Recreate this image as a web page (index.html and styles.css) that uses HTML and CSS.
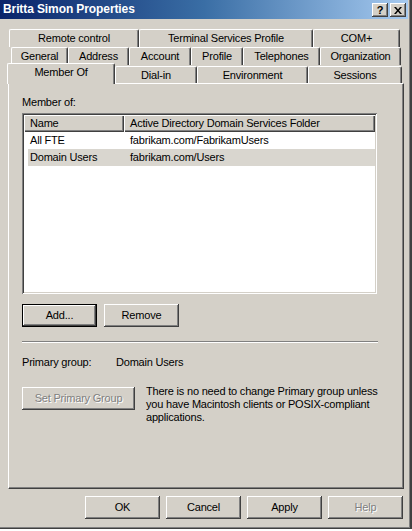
FILE: index.html
```html
<!DOCTYPE html>
<html>
<head>
<meta charset="utf-8">
<link rel="stylesheet" href="styles.css">
</head>
<body>
<div class="window">
  <div class="titlebar">
    <span class="title">Britta Simon Properties</span>
    <div class="caption-btns">
      <span class="cbtn help">?</span>
      <span class="cbtn close"><svg width="8" height="7" viewBox="0 0 8 7"><path d="M0 0h2l2 2.5 2-2.5h2l-3 3.5 3 3.5h-2l-2-2.5-2 2.5h-2l3-3.5z" fill="#000"/></svg></span>
    </div>
  </div>

  <div class="tabs">
    <div class="tabrow row1">
      <div class="tab w-remote">Remote control</div>
      <div class="tab w-terminal">Terminal Services Profile</div>
      <div class="tab w-com">COM+</div>
    </div>
    <div class="tabrow row2">
      <div class="tab w-general">General</div>
      <div class="tab w-address">Address</div>
      <div class="tab w-account">Account</div>
      <div class="tab w-profile">Profile</div>
      <div class="tab w-tel">Telephones</div>
      <div class="tab w-org">Organization</div>
    </div>
    <div class="tabrow row3">
      <div class="tab selected w-member">Member Of</div>
      <div class="tab w-dialin">Dial-in</div>
      <div class="tab w-env">Environment</div>
      <div class="tab w-sessions">Sessions</div>
    </div>
  </div>

  <div class="panel">
    <div class="label">Member of:</div>
    <div class="listview">
      <div class="lv-header">
        <div class="hcell col1">Name</div>
        <div class="hcell col2">Active Directory Domain Services Folder</div>
      </div>
      <div class="lv-row">
        <div class="cell col1">All FTE</div>
        <div class="cell col2">fabrikam.com/FabrikamUsers</div>
      </div>
      <div class="lv-row sel">
        <div class="cell col1">Domain Users</div>
        <div class="cell col2">fabrikam.com/Users</div>
      </div>
    </div>

    <div class="btnrow">
      <button class="btn default">Add...</button>
      <button class="btn">Remove</button>
    </div>

    <div class="separator"></div>

    <div class="primary">
      <span class="plabel">Primary group:</span>
      <span class="pvalue">Domain Users</span>
    </div>

    <div class="setrow">
      <button class="btn disabled wide">Set Primary Group</button>
      <p class="note">There is no need to change Primary group unless you have Macintosh clients or POSIX-compliant applications.</p>
    </div>
  </div>

  <div class="footer">
    <button class="btn">OK</button>
    <button class="btn">Cancel</button>
    <button class="btn">Apply</button>
    <button class="btn disabled">Help</button>
  </div>
</div>
</body>
</html>
```

FILE: styles.css
```css
html, body {
  margin: 0;
  padding: 0;
  background: #ffffff;
}

body {
  width: 412px;
  height: 531px;
  overflow: hidden;
  font-family: "Liberation Sans", Arial, sans-serif;
  font-size: 11px;
  letter-spacing: -0.2px;
  line-height: 13px;
  color: #000;
}

.window {
  box-sizing: border-box;
  width: 412px;
  height: 529px;
  background: #d4d0c8;
  padding-right: 4px;
  display: flex;
  flex-direction: column;
  box-shadow: inset -2px -1px #404040, inset -3px -2px #808080;
}

/* Title bar */
.titlebar {
  height: 19px;
  background: linear-gradient(to right, #0a246a 0%, #3a6ea5 50%, #a6caf0 100%);
  display: flex;
  align-items: center;
  justify-content: space-between;
  padding: 0 2px 0 3px;
}

.title {
  color: #fff;
  font-weight: bold;
  font-size: 12px;
  letter-spacing: -0.1px;
  line-height: 19px;
}

.caption-btns {
  display: flex;
  gap: 2px;
  align-self: flex-start;
  margin-top: 3px;
}

.cbtn {
  box-sizing: border-box;
  width: 16px;
  height: 14px;
  background: #d4d0c8;
  box-shadow: inset -1px -1px #404040, inset 1px 1px #fff, inset -2px -2px #808080;
  display: flex;
  align-items: center;
  justify-content: center;
  font-weight: bold;
  font-size: 11px;
  line-height: 14px;
  letter-spacing: 0;
}

.cbtn svg {
  display: block;
}

/* Tabs */
.tabs {
  margin-top: 10px;
  display: flex;
  flex-direction: column;
}

.tabrow {
  display: flex;
  height: 18px;
  align-items: flex-end;
}

.row1 { padding-left: 9px; }
.row2 { padding-left: 11px; }
.row3 { padding-left: 7px; }

.tab {
  box-sizing: border-box;
  height: 18px;
  background: #d4d0c8;
  border-top: 1px solid #fff;
  border-left: 1px solid #fff;
  border-right: 1px solid #404040;
  border-radius: 2px 2px 0 0;
  box-shadow: inset -1px 0 #808080;
  text-align: center;
  line-height: 17px;
}

.row3 .tab {
  height: 17px;
  line-height: 16px;
}

.row3 .tab.selected {
  height: 21px;
  margin-bottom: -1px;
  line-height: 17px;
  padding-bottom: 3px;
  position: relative;
  z-index: 2;
}

.w-remote { width: 130px; }
.w-terminal { width: 174px; }
.w-com { width: 87px; }

.w-general { width: 57px; }
.w-address { width: 61px; }
.w-account { width: 62px; }
.w-profile { width: 52px; }
.w-tel { width: 77px; }
.w-org { width: 81px; }

.w-member { width: 108px; }
.w-dialin { width: 82px; }
.w-env { width: 111px; }
.w-sessions { width: 94px; }

/* Panel */
.panel {
  box-sizing: border-box;
  margin-left: 8px;
  width: 396px;
  height: 406px;
  border-top: 1px solid #fff;
  border-left: 1px solid #fff;
  border-right: 1px solid #404040;
  border-bottom: 1px solid #404040;
  box-shadow: inset -1px -1px #808080;
  padding: 12px 0 0 13px;
  display: flex;
  flex-direction: column;
}

.label {
  height: 13px;
}

.listview {
  box-sizing: border-box;
  margin-top: 4px;
  width: 355px;
  height: 181px;
  background: #fff;
  padding: 2px;
  box-shadow: inset 1px 1px #808080, inset -1px -1px #fff, inset 2px 2px #404040, inset -2px -2px #d4d0c8;
}

.lv-header {
  display: flex;
  height: 17px;
}

.hcell {
  box-sizing: border-box;
  height: 17px;
  background: #d4d0c8;
  box-shadow: inset 1px 1px #fff, inset -1px -1px #404040, inset -2px -2px #808080;
  padding-left: 6px;
  line-height: 16px;
}

.hcell.col1 { width: 100px; }
.hcell.col2 { flex: 1; }

.lv-row {
  display: flex;
  height: 17px;
  line-height: 17px;
  margin-left: 4px;
}

.lv-row.sel {
  background: #d9d6cf;
}

.cell.col1 {
  width: 96px;
  padding-left: 2px;
  box-sizing: border-box;
}

.cell.col2 {
  padding-left: 6px;
}

/* Buttons */
.btn {
  box-sizing: border-box;
  width: 75px;
  height: 23px;
  padding: 0;
  margin: 0;
  border: 0;
  background: #d4d0c8;
  font: inherit;
  letter-spacing: inherit;
  color: #000;
  box-shadow: inset -1px -1px #404040, inset 1px 1px #fff, inset -2px -2px #808080;
  text-align: center;
}

.btn.default {
  box-shadow: inset 0 0 0 1px #000, inset -2px -2px #404040, inset 2px 2px #fff, inset -3px -3px #808080;
}

.btn.disabled {
  color: #808080;
  text-shadow: 1px 1px #fff;
}

.btn.wide {
  width: 113px;
  flex: none;
}

.btnrow {
  margin-top: 10px;
  display: flex;
  gap: 7px;
}

.separator {
  margin-top: 14px;
  width: 356px;
  height: 1px;
  background: #808080;
  border-bottom: 1px solid #fff;
}

.primary {
  margin-top: 13px;
  display: flex;
  height: 13px;
}

.plabel {
  width: 94px;
}

.setrow {
  margin-top: 18px;
  display: flex;
  align-items: flex-start;
}

.note {
  margin: -2px 0 0 11px;
  width: 240px;
  line-height: 13px;
}

/* Footer */
.footer {
  margin-top: 7px;
  display: flex;
  justify-content: flex-end;
  gap: 6px;
  padding-right: 5px;
}
```
